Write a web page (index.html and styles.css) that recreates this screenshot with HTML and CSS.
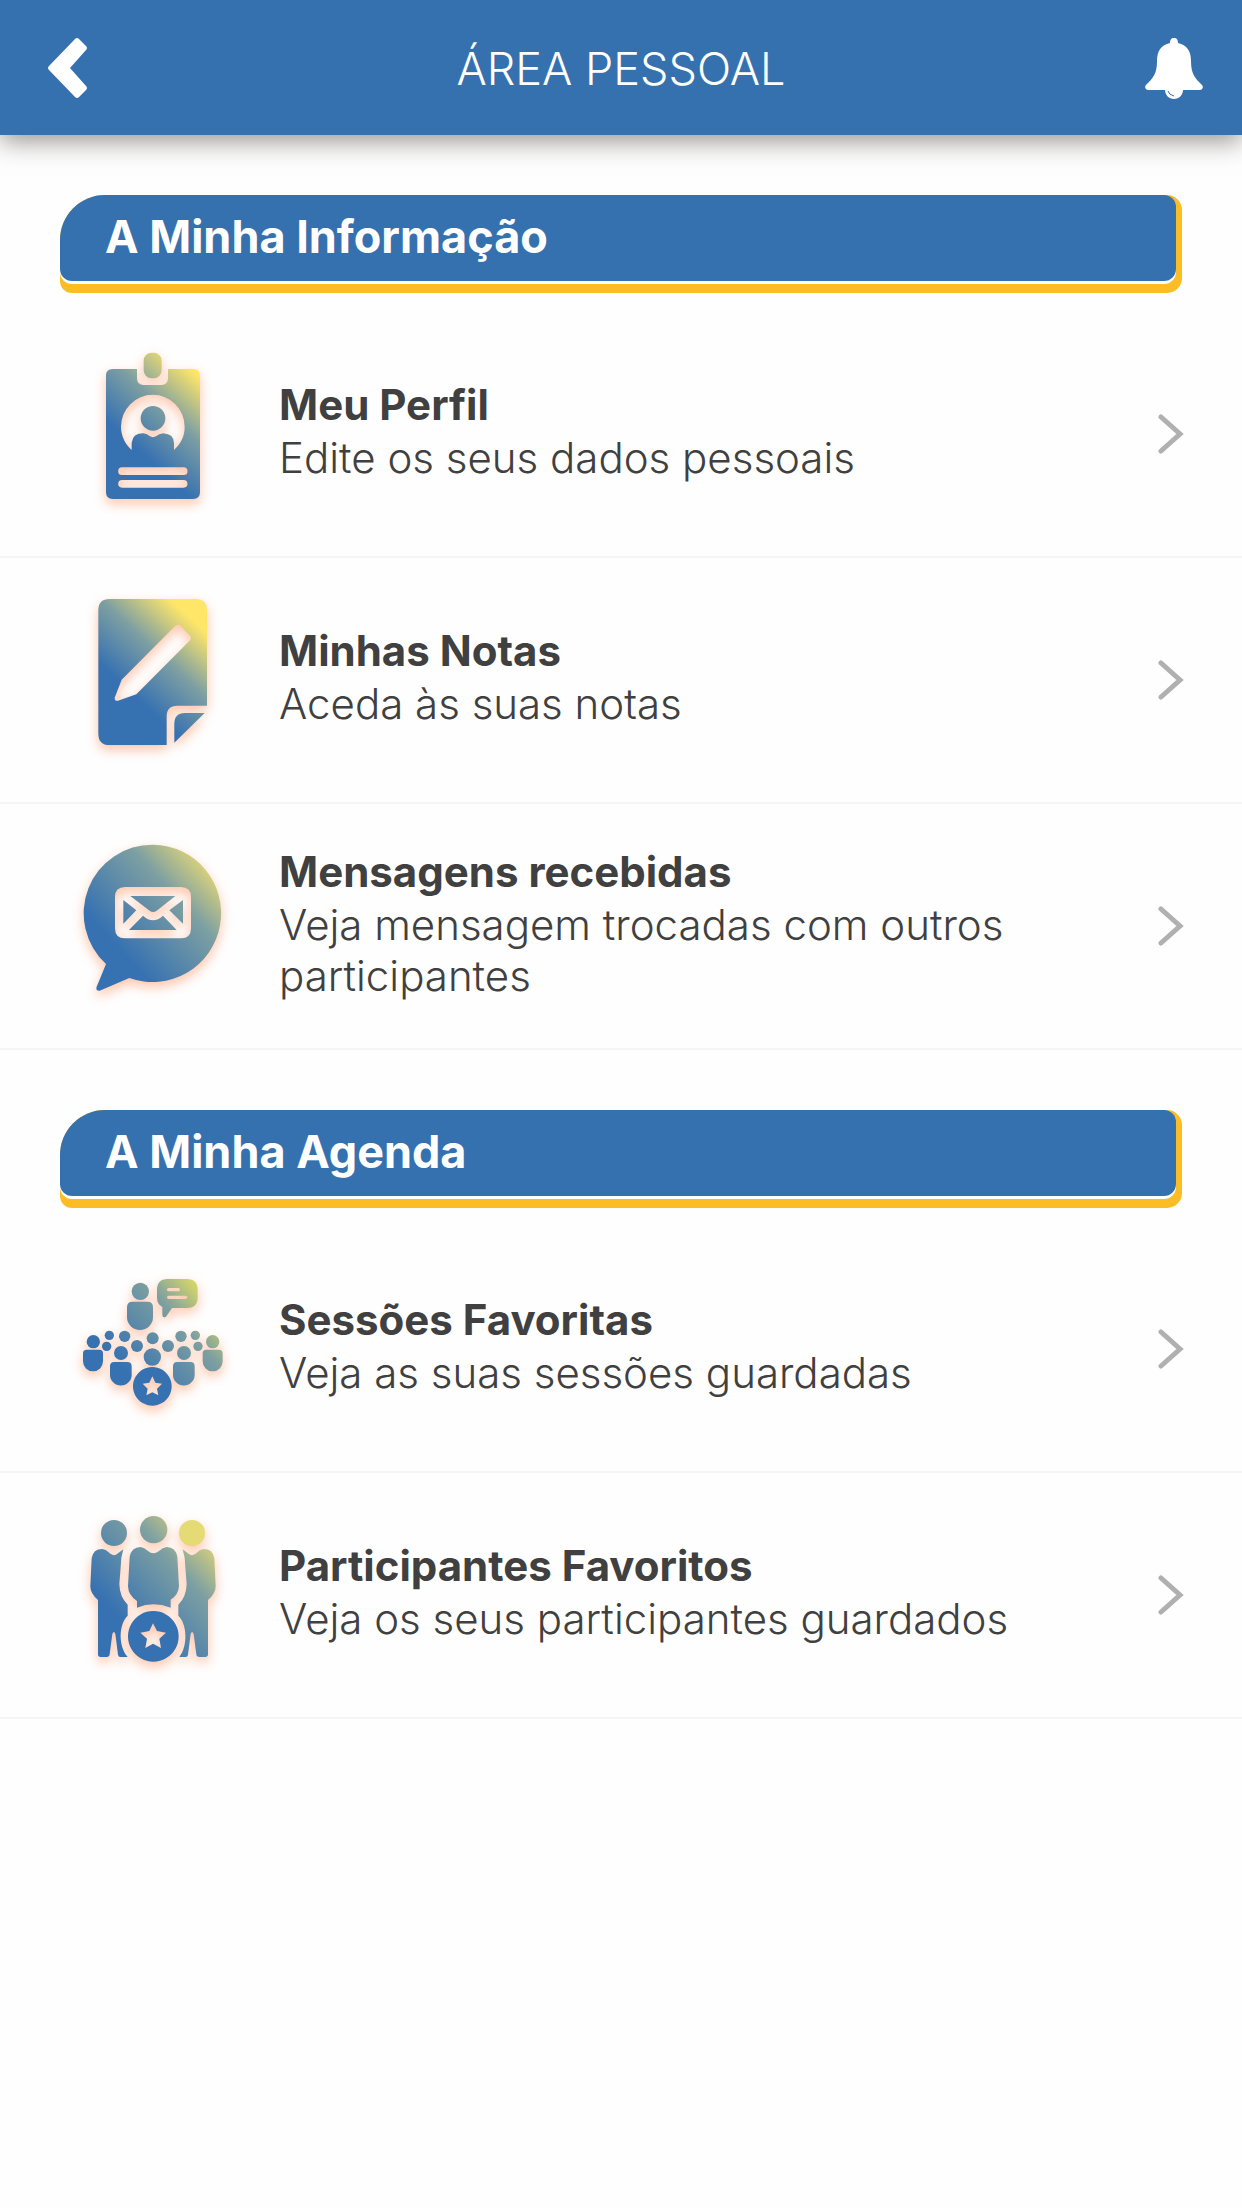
FILE: index.html
```html
<!DOCTYPE html>
<html lang="pt">
<head>
<meta charset="utf-8">
<meta name="viewport" content="width=device-width, initial-scale=1">
<title>Área Pessoal</title>
<link rel="stylesheet" href="styles.css">
</head>
<body>
<svg class="defs" aria-hidden="true">
  <defs>
    <linearGradient id="tone" gradientUnits="userSpaceOnUse" x1="225" y1="350" x2="420" y2="140">
      <stop offset="0" stop-color="#3671b1"/><stop offset="0.500" stop-color="#7d9fa2"/><stop offset="1" stop-color="#ffe669"/>
    </linearGradient>
    <linearGradient id="tone-soft" gradientUnits="userSpaceOnUse" x1="170" y1="350" x2="455" y2="90">
      <stop offset="0" stop-color="#3671b1"/><stop offset="0.600" stop-color="#7c9fa2"/><stop offset="1" stop-color="#ecdc74"/>
    </linearGradient>
    <linearGradient id="tone-crowd" gradientUnits="userSpaceOnUse" x1="165" y1="300" x2="420" y2="75">
      <stop offset="0" stop-color="#3671b1"/><stop offset="0.650" stop-color="#7d9fa0"/><stop offset="1" stop-color="#dcdb65"/>
    </linearGradient>
  </defs>
</svg>

<header class="topbar">
  <button class="topbar__button" type="button" aria-label="Voltar">
    <svg class="topbar__icon" viewBox="0 0 60 66"><path d="M37 4Q39 2 41 4L48 11Q50 13 48 15L32 33 48 51Q50 53 48 55L41 62Q39 64 37 62L11 35Q9 33 11 31Z"/></svg>
  </button>
  <h1 class="topbar__title">ÁREA PESSOAL</h1>
  <button class="topbar__button" type="button" aria-label="Notificações">
    <svg class="topbar__icon" viewBox="0 0 60 66"><path d="M30 3C33 3 34 5 34 8C43 10 47 16 47 26C47 39 51 43 58 50C60 52 58 55 56 55H39C39 60 35 64 30 64C25 64 21 60 21 55H4C2 55 0 52 2 50C9 43 13 39 13 26C13 16 17 10 26 8C26 5 27 3 30 3Z"/><path class="topbar__detail" d="M24 56Q25 60 30 61"/></svg>
  </button>
</header>

<main>
  <section class="section">
    <h2 class="section__title"><span class="section__label">A Minha Informação</span></h2>
    <ul class="menu">
      <li>
        <a class="item" href="#perfil">
          <svg class="item__icon" viewBox="54 33 450 558" fill="url(#tone)" aria-hidden="true">
            <rect x="251" y="68" width="54" height="77" rx="24"/>
            <path fill-rule="evenodd" d="M158 117H231V145Q231 165 251 165H304Q324 165 324 145V117H400Q420 117 420 137V487Q420 507 400 507H158Q138 507 138 487V137Q138 117 158 117ZM215 360V338Q218 310 250 310Q262 312 270 319Q279 324 288 319Q296 312 310 310Q342 312 342 340V360C363 340 374 318 374 290A95 95 0 0 0 183 290C183 318 196 343 215 360ZM186 412A11.500 11.500 0 0 0 186 435H371A11.500 11.500 0 0 0 371 412ZM186 450A11.500 11.500 0 0 0 186 473H371A11.500 11.500 0 0 0 371 450Z"/>
            <circle cx="279" cy="265" r="37"/>
          </svg>
          <span class="item__text"><strong class="item__name">Meu Perfil</strong><span class="item__info">Edite os seus dados pessoais</span></span>
          <svg class="item__arrow" viewBox="0 0 26 42" aria-hidden="true"><path d="M3 4 22 21 3 38"/></svg>
        </a>
      </li>
      <li>
        <a class="item" href="#notas">
          <svg class="item__icon" viewBox="54 21 450 558" fill="url(#tone)" aria-hidden="true">
            <path fill-rule="evenodd" d="M149 57H407Q441 57 441 91V377H352Q320 377 320 409V495H149Q115 495 115 461V91Q115 57 149 57ZM346 137 185 299 164 353Q163 364 174 362L229 343 391 180Q395 174 391 169L362 137Q354 131 346 137Z"/>
            <path d="M343 488V431Q343 399 375 399H434Z"/>
          </svg>
          <span class="item__text"><strong class="item__name">Minhas Notas</strong><span class="item__info">Aceda às suas notas</span></span>
          <svg class="item__arrow" viewBox="0 0 26 42" aria-hidden="true"><path d="M3 4 22 21 3 38"/></svg>
        </a>
      </li>
      <li>
        <a class="item" href="#mensagens">
          <svg class="item__icon" viewBox="54 9 450 558" fill="url(#tone-soft)" aria-hidden="true">
            <path fill-rule="evenodd" d="M279 44A206 206 0 1 1 208 444L119 482Q106 483 110 470L138 402A206 206 0 0 1 279 44ZM195 171Q165 171 165 201V295Q165 325 195 325H363Q393 325 393 295V201Q393 171 363 171Z"/>
            <path d="M211 198H346L290 242Q279 250 269 242ZM190 210 229 241 190 281ZM369 210V281L328 241ZM249 257Q279 284 309 257L350 300H207Z"/>
          </svg>
          <span class="item__text"><strong class="item__name">Mensagens recebidas</strong><span class="item__info">Veja mensagem trocadas com outros participantes</span></span>
          <svg class="item__arrow" viewBox="0 0 26 42" aria-hidden="true"><path d="M3 4 22 21 3 38"/></svg>
        </a>
      </li>
    </ul>
  </section>

  <section class="section">
    <h2 class="section__title"><span class="section__label">A Minha Agenda</span></h2>
    <ul class="menu">
      <li>
        <a class="item" href="#sessoes">
          <svg class="item__icon" viewBox="54 -9 450 558" fill="url(#tone-crowd)" aria-hidden="true">
            <circle cx="241" cy="97" r="26"/>
            <path d="M217 128H263Q279 128 279 145V174A39 39 0 0 1 201 174V145Q201 128 217 128Z"/>
            <path fill-rule="evenodd" d="M323 60H381Q413 60 413 92V115Q413 147 381 147H336L318 173Q308 179 307 168V144Q291 137 291 115V92Q291 60 323 60ZM326 87A4.500 4.500 0 0 0 326 97H355A4.500 4.500 0 0 0 355 87ZM326 110A4.500 4.500 0 0 0 326 120H377A4.500 4.500 0 0 0 377 110Z"/>
            <circle cx="100" cy="248" r="20"/><circle cx="148" cy="229" r="14"/><circle cx="194" cy="232" r="17"/><circle cx="140" cy="262" r="14"/>
            <circle cx="231" cy="261" r="18"/><circle cx="278" cy="238" r="18"/><circle cx="324" cy="261" r="18"/><circle cx="363" cy="232" r="17"/>
            <circle cx="406" cy="229" r="14"/><circle cx="414" cy="262" r="14"/><circle cx="458" cy="248" r="20"/>
            <circle cx="183" cy="282" r="21"/><circle cx="372" cy="282" r="21"/><circle cx="277" cy="294" r="26"/>
            <path d="M80 272H118Q129 272 129 283V307A30 30 0 0 1 69 307V283Q69 272 80 272ZM439 272H477Q488 272 488 283V307A30 30 0 0 1 428 307V283Q428 272 439 272ZM163 309H202Q215 309 215 322V347A32.500 32.500 0 0 1 150 347V322Q150 309 163 309ZM352 309H391Q404 309 404 322V347A32.500 32.500 0 0 1 339 347V322Q339 309 352 309Z"/>
            <path fill-rule="evenodd" d="M277 324A58 58 0 1 1 276.900 324ZM277 352 268 371 248 374 263 389 259 409 277 400 295 409 291 389 306 374 286 371Z" fill="#3671b1"/>
          </svg>
          <span class="item__text"><strong class="item__name">Sessões Favoritas</strong><span class="item__info">Veja as suas sessões guardadas</span></span>
          <svg class="item__arrow" viewBox="0 0 26 42" aria-hidden="true"><path d="M3 4 22 21 3 38"/></svg>
        </a>
      </li>
      <li>
        <a class="item" href="#participantes">
          <svg class="item__icon" viewBox="54 9 450 558" fill="url(#tone-soft)" aria-hidden="true">
            <circle cx="162" cy="102" r="39"/><circle cx="281" cy="92" r="41"/><circle cx="396" cy="102" r="39" fill="#e5db75"/>
            <path d="M114 303Q91 284 91 262L95 178Q99 150 127 150Q138 151 146 160Q160 176 174 163L190 151Q182 176 182 205L178 255Q179 294 203 317V350C176 376 174 440 203 474H181Q175 474 174 467L166 405Q162 393 157 405L149 466Q148 474 140 474H122Q114 474 114 466Z"/>
            <path d="M444 303Q467 284 467 262L463 178Q459 150 431 150Q420 151 412 160Q398 176 384 163L368 151Q376 176 376 205L380 255Q379 294 355 317V350C382 376 384 440 358 474H377Q383 474 384 467L392 405Q396 393 401 405L409 466Q410 474 418 474H436Q444 474 444 466Z"/>
            <path d="M231 326V306Q205 289 204 262L209 174Q214 144 242 144Q253 145 264 156Q280 170 297 156Q308 145 320 144Q347 144 352 174L357 262Q355 289 332 302V326Q280 306 231 326Z"/>
            <path fill-rule="evenodd" d="M280 336A76 76 0 1 1 279.900 336ZM279 373 268 396 241 401 261 419 256 447 279 434 303 447 298 419 318 401 291 396Z" fill="#3671b1"/>
          </svg>
          <span class="item__text"><strong class="item__name">Participantes Favoritos</strong><span class="item__info">Veja os seus participantes guardados</span></span>
          <svg class="item__arrow" viewBox="0 0 26 42" aria-hidden="true"><path d="M3 4 22 21 3 38"/></svg>
        </a>
      </li>
    </ul>
  </section>
</main>
</body>
</html>
```
FILE: styles.css
```css
* {
  box-sizing: border-box;
}

body {
  margin: 0;
  background: #fefefe;
  color: #404040;
  font-family: "Inter", "Noto Sans", sans-serif;
}

.defs {
  position: absolute;
  width: 0;
  height: 0;
}

.topbar {
  display: flex;
  align-items: center;
  justify-content: space-between;
  height: 135px;
  padding: 0 38px;
  background: #3671af;
  box-shadow: 0 6px 24px 0 rgba(50, 42, 36, 0.5);
  color: #fff;
}

.topbar__button {
  display: flex;
  padding: 0;
  border: 0;
  background: none;
  color: inherit;
}

.topbar__icon {
  width: 60px;
  height: 66px;
  fill: currentColor;
}

.topbar__detail {
  fill: none;
  stroke: #3671af;
  stroke-width: 1;
}

.topbar__title {
  margin: 0;
  padding-top: 2px;
  font-size: 45px;
  font-weight: 300;
  line-height: 52px;
}

.section {
  padding-top: 60px;
}

.section__title {
  margin: 0 60px 19px;
  padding: 0 6px 12px 0;
  border-radius: 45px 15px 15px 12px;
  background: #fcbc24;
  font-size: 45px;
  line-height: 52px;
}

.section__label {
  display: block;
  padding: 16px 45px 18px;
  border-radius: 45px 12px 12px 12px;
  background: #3671af;
  box-shadow: 0 3px 0 #fefefe;
  color: #fff;
}

.menu {
  margin: 0;
  padding: 0;
  list-style: none;
}

.item {
  display: flex;
  align-items: center;
  min-height: 246px;
  padding: 0 58px 0 78px;
  border-bottom: 2px solid #f5f5f5;
  color: inherit;
  text-decoration: none;
}

.item__icon {
  flex: none;
  width: 150px;
  height: 186px;
  filter: drop-shadow(0 5px 6px #ffc4a8);
}

.item__text {
  flex: 1;
  padding: 0 60px 6px 51px;
  font-size: 42px;
  line-height: 51px;
}

.item__name,
.item__info {
  display: block;
}

.item__name {
  margin-bottom: 2px;
  font-weight: 700;
}

.item__info {
  font-weight: 300;
}

.item__arrow {
  flex: none;
  width: 26px;
  height: 42px;
  fill: none;
  stroke: #b0b0b0;
  stroke-width: 5;
  stroke-linecap: round;
}
```
